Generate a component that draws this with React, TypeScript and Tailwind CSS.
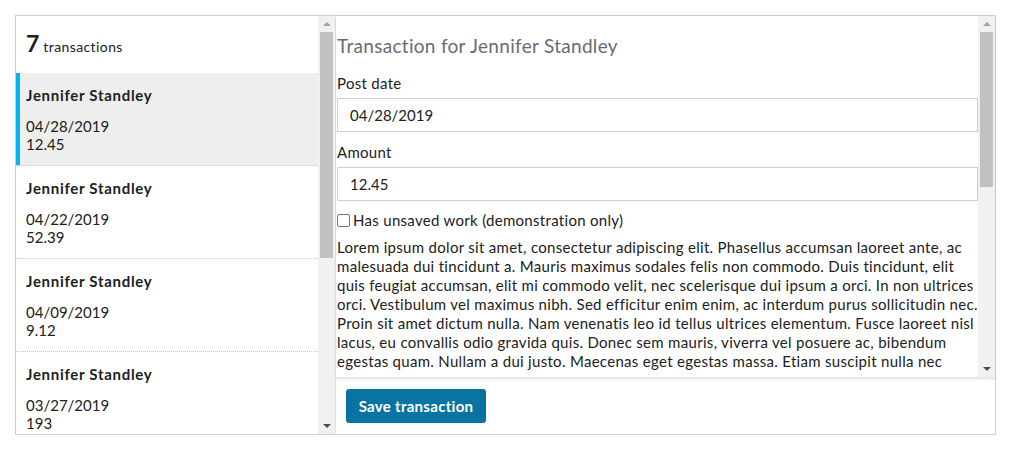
import React from "react";

const transactions = [
  { name: "Jennifer Standley", date: "04/28/2019", amount: "12.45" },
  { name: "Jennifer Standley", date: "04/22/2019", amount: "52.39" },
  { name: "Jennifer Standley", date: "04/09/2019", amount: "9.12" },
  { name: "Jennifer Standley", date: "03/27/2019", amount: "193" },
];

const lorem =
  "Lorem ipsum dolor sit amet, consectetur adipiscing elit. Phasellus accumsan laoreet ante, ac malesuada dui tincidunt a. Mauris maximus sodales felis non commodo. Duis tincidunt, elit quis feugiat accumsan, elit mi commodo velit, nec scelerisque dui ipsum a orci. In non ultrices orci. Vestibulum vel maximus nibh. Sed efficitur enim enim, ac interdum purus sollicitudin nec. Proin sit amet dictum nulla. Nam venenatis leo id tellus ultrices elementum. Fusce laoreet nisl lacus, eu convallis odio gravida quis. Donec sem mauris, viverra vel posuere ac, bibendum egestas quam. Nullam a dui justo. Maecenas eget egestas massa. Etiam suscipit nulla nec";

function Scrollbar({ thumbHeight }: { thumbHeight: number }) {
  return (
    <div className="flex w-[17px] shrink-0 flex-col bg-[#f1f1f1]">
      <div className="flex h-[16px] items-center justify-center">
        <div className="h-0 w-0 border-x-[4px] border-b-[4px] border-x-transparent border-b-[#a3a3a3]" />
      </div>
      <div className="flex-1">
        <div className="mx-[2px] bg-[#c1c1c1]" style={{ height: thumbHeight }} />
      </div>
      <div className="flex h-[16px] items-center justify-center">
        <div className="h-0 w-0 border-x-[4px] border-t-[4px] border-x-transparent border-t-[#505050]" />
      </div>
    </div>
  );
}

export default function App() {
  return (
    <div className="bg-white p-[15px] font-['Lato',sans-serif] text-[15px] text-[#212121]">
      <div className="flex h-[420px] w-[981px] border border-[#cdcfd2]">
        {/* list */}
        <div className="flex w-[320px] shrink-0 border-r border-[#e2e3e4]">
          <div className="flex-1 overflow-hidden">
            <div className="flex h-[57px] items-baseline pl-[10px] pt-[16px]">
              <span className="text-[23px] font-bold leading-none tracking-[-1px]">7</span>
              <span className="ml-[5px] text-[14px] leading-none tracking-[0.4px]">transactions</span>
            </div>
            {transactions.map((t, i) => (
              <div
                key={i}
                className={`h-[93px] border-b border-dotted border-[#c9c9c9] pl-[10px] pt-[13px] ${i === 0 ? "bg-[#eeeeee] shadow-[inset_4px_0_0_#00b4f1]" : ""}`}
              >
                <div className="text-[15px] font-bold leading-[19px] tracking-[0.7px]">{t.name}</div>
                <div className="mt-[12px] leading-[18px]">{t.date}</div>
                <div className="leading-[18px]">{t.amount}</div>
              </div>
            ))}
          </div>
          <Scrollbar thumbHeight={226} />
        </div>

        {/* detail */}
        <div className="flex flex-1 flex-col">
          <div className="flex h-[362px] border-b border-[#e6e6e6] shadow-[0_1px_2px_rgba(0,0,0,0.12)]">
            <div className="flex-1 overflow-hidden pl-[1px] tracking-[0.3px]">
              <h2 className="mt-[18px] text-[19px] leading-[24px] text-[#686c73]">Transaction for Jennifer Standley</h2>
              <div className="mt-[16px] leading-[19px]">Post date</div>
              <div className="mt-[5px] flex h-[34px] items-center border border-[#cdcfd2] pl-[12px] tracking-normal">04/28/2019</div>
              <div className="mt-[11px] leading-[19px]">Amount</div>
              <div className="mt-[5px] flex h-[34px] items-center border border-[#cdcfd2] pl-[12px] tracking-normal">12.45</div>
              <label className="mt-[10px] flex items-center leading-[19px]">
                <span className="mr-[3px] h-[13px] w-[13px] rounded-[2px] border border-[#767676] bg-white" />
                Has unsaved work (demonstration only)
              </label>
              <p className="mt-[8px] leading-[19px]">{lorem}</p>
            </div>
            <Scrollbar thumbHeight={155} />
          </div>
          <div className="pl-[10px] pt-[11px]">
            <button className="h-[34px] w-[140px] rounded-[3px] bg-[#0974a1] text-[15px] font-bold tracking-[0.3px] text-white">
              Save transaction
            </button>
          </div>
        </div>
      </div>
    </div>
  );
}
